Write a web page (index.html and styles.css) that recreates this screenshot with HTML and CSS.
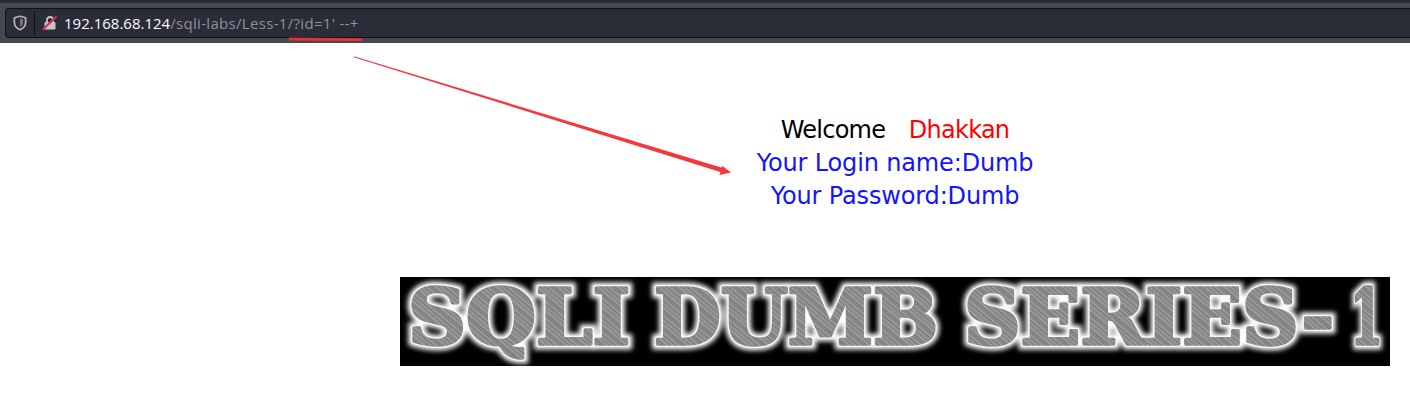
FILE: index.html
```html
<!DOCTYPE html>
<html lang="en">
<head>
  <meta charset="UTF-8" />
  <title>Less-1</title>
  <link rel="stylesheet" href="styles.css">
</head>
<body>
  <div class="toolbar">
    <div class="urlbar">
      <svg class="shield" width="14" height="16" viewBox="0 0 14 16">
        <path d="M7 1.2 L12.6 2.8 V7.5 C12.6 11 10.2 13.4 7 14.8 C3.8 13.4 1.4 11 1.4 7.5 V2.8 Z" fill="none" stroke="#b4b5ba" stroke-width="1.7" stroke-linejoin="round"/>
        <path d="M7 3.6 L10 4.5 V7.5 C10 9.6 8.8 11 7 12 Z" fill="#b4b5ba" opacity="0.55"/>
      </svg>
      <span class="divider"></span>
      <svg class="lock" width="16" height="16" viewBox="0 0 16 16">
        <path d="M5 7.5 V5 C5 3 6.4 2 8 2 C9.6 2 11 3 11 5 V7.5" fill="none" stroke="#c4c5c8" stroke-width="1.8"/>
        <rect x="2.5" y="7" width="11" height="7.5" rx="1" fill="#c4c5c8"/>
        <path d="M0.6 14.8 L14.6 1.2" stroke="#e22850" stroke-width="2"/>
      </svg>
      <span class="url"><span class="host">192.168.68.124</span><span class="path">/sqli-labs/Less-1/?id=1' --+</span></span>
    </div>
  </div>

  <svg class="marks" width="1410" height="180" viewBox="0 0 1410 180">
    <path d="M290 39 L361 39.6" fill="none" stroke="#e8303a" stroke-width="2.8" stroke-linecap="round"/>
    <path d="M354 56.2 L722 167.8 L721.4 165.2 L731 172.6 L719.4 175 L720.4 172 L353.8 57.2 Z" fill="#f4383c"/>
  </svg>

  <main class="page">
    <div class="greeting">
      <div class="welcome">Welcome&nbsp;&nbsp;&nbsp;<span class="red">Dhakkan</span></div>
      <div class="blue">Your Login name:Dumb</div>
      <div class="blue">Your Password:Dumb</div>
    </div>

    <svg class="banner" width="990" height="89" viewBox="0 0 990 89">
      <defs>
        <pattern id="hatch" width="13" height="13" patternUnits="userSpaceOnUse" patternTransform="rotate(-50)">
          <rect width="13" height="13" fill="#8e8e8e"/>
          <rect x="0.4" width="0.7" height="13" fill="#717171"/>
          <rect x="2.1" width="1" height="13" fill="#a2a2a2"/>
          <rect x="3.9" width="0.6" height="13" fill="#7a7a7a"/>
          <rect x="5.6" width="1.1" height="13" fill="#9c9c9c"/>
          <rect x="7.6" width="0.8" height="13" fill="#6e6e6e"/>
          <rect x="9.3" width="0.7" height="13" fill="#aaa"/>
          <rect x="11.2" width="0.9" height="13" fill="#7c7c7c"/>
        </pattern>
        <filter id="glow" x="-5%" y="-30%" width="110%" height="160%">
          <feGaussianBlur stdDeviation="2.4"/>
        </filter>
        <g id="title">
          <text x="8" y="67" textLength="222" lengthAdjust="spacingAndGlyphs">SQLI</text>
          <text x="254" y="67" textLength="284" lengthAdjust="spacingAndGlyphs">DUMB</text>
          <text x="564" y="67" textLength="370" lengthAdjust="spacingAndGlyphs">SERIES-</text>
          <text x="950" y="67" textLength="33" lengthAdjust="spacingAndGlyphs">1</text>
        </g>
      </defs>
      <rect width="990" height="89" fill="#000"/>
      <use href="#title" class="layer-glow" filter="url(#glow)"/>
      <use href="#title" class="layer-edge"/>
      <use href="#title" class="layer-fill"/>
    </svg>
  </main>
</body>
</html>
```

FILE: styles.css
```css
html, body {
  margin: 0;
  background: #fff;
}
body {
  position: relative;
  height: 405px;
  overflow: hidden;
  font-family: "DejaVu Sans", sans-serif;
}
.toolbar {
  display: flex;
  height: 30px;
  padding: 5px 0 5px 5px;
  background: #45484d;
  border-top: 3px solid #2b2a33;
}
.urlbar {
  flex: 1;
  display: flex;
  align-items: center;
  box-sizing: border-box;
  background: #2a2c38;
  border: 1px solid #111216;
  border-right: none;
  border-radius: 4px 0 0 4px;
}
.shield {
  margin-left: 7px;
}
.divider {
  width: 1px;
  height: 24px;
  background: #0e0f13;
  margin: 0 7px 0 7px;
}
.lock {
  margin-right: 6px;
}
.url {
  font-family: "Open Sans", sans-serif;
  font-size: 15px;
}
.host {
  color: #fbfbfe;
}
.path {
  color: #8f9097;
  letter-spacing: 0.32px;
}
.marks {
  position: absolute;
  left: 0;
  top: 0;
}
.page {
  width: 990px;
  margin-left: 400px;
  padding-top: 71px;
}
.greeting {
  font-size: 24px;
  line-height: 33px;
  text-align: center;
  color: #000;
}
.welcome {
  letter-spacing: -0.75px;
}
.red {
  margin-left: 3px;
  color: #f00;
}
.blue {
  color: #1414ff;
  letter-spacing: -0.15px;
}
.banner {
  display: block;
  margin-top: 64px;
}
.banner text {
  font-family: "DejaVu Serif", serif;
  font-weight: bold;
  font-size: 76px;
}
.layer-glow {
  fill: #fff;
  stroke: #fff;
  stroke-width: 11px;
}
.layer-edge {
  fill: #f6f6f6;
  stroke: #f6f6f6;
  stroke-width: 6px;
  stroke-linejoin: round;
}
.layer-fill {
  fill: url(#hatch);
  stroke: url(#hatch);
  stroke-width: 3.5px;
  stroke-linejoin: round;
}
```
